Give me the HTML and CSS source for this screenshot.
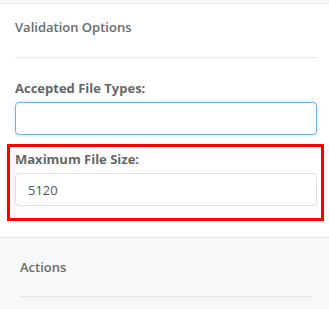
FILE: index.html
```html
<!DOCTYPE html>
<html lang="en">
<head>
    <meta charset="UTF-8">
    <meta name="viewport" content="width=device-width, initial-scale=1.0">
    <title>Upload Field Settings</title>
    <link rel="stylesheet" href="styles.css">
</head>
<body>
    <div class="top-strip"></div>

    <div class="panel-section">
        <h3 class="section-title">Validation Options</h3>

        <div class="form-group">
            <label for="accepted-types">Accepted File Types:</label>
            <input type="text" id="accepted-types" class="form-input is-focused" value="">
        </div>

        <div class="form-group highlighted">
            <label for="max-size">Maximum File Size:</label>
            <input type="text" id="max-size" class="form-input" value="5120">
        </div>
    </div>

    <div class="panel-section actions-section">
        <h3 class="section-title">Actions</h3>
    </div>
</body>
</html>
```

FILE: styles.css
```css
* {
    margin: 0;
    padding: 0;
    box-sizing: border-box;
}

body {
    font-family: 'Open Sans', 'Noto Sans', sans-serif;
    font-size: 13px;
    line-height: 20px;
    color: #666;
    background: #fff;
}

.top-strip {
    height: 4px;
    background: #f5f6f8;
    border-bottom: 1px solid #e8eaed;
}

.panel-section {
    padding: 0 12px 16px 15px;
}

.section-title {
    font-size: 13px;
    font-weight: 600;
    color: #6b6b6b;
    padding: 13px 0 20px;
    border-bottom: 1px solid #e8e8e8;
}

.form-group {
    margin-top: 20px;
}

.form-group label {
    display: block;
    font-weight: 700;
    color: #666;
    margin-bottom: 4px;
}

.form-input {
    display: block;
    width: 100%;
    height: 33px;
    padding: 0 12px;
    font-family: inherit;
    font-size: 13px;
    color: #555;
    border: 1px solid #e0e0e0;
    border-radius: 4px;
    background: #fff;
    outline: none;
}

.form-input.is-focused {
    border-color: #6cb2f2;
    box-shadow: 0 0 4px rgba(108, 178, 242, 0.35);
}

.highlighted {
    margin: 9px -7px 0 -8px;
    padding: 2px 4px 12px 5px;
    border: 3px solid #ff0000;
}

.actions-section {
    background: #f7f8fa;
    border-top: 1px solid #e5e7ea;
    padding: 0 17px 12px 20px;
}

.actions-section .section-title {
    padding: 19px 0 19px;
    border-bottom-color: #e3e4e6;
}
```
